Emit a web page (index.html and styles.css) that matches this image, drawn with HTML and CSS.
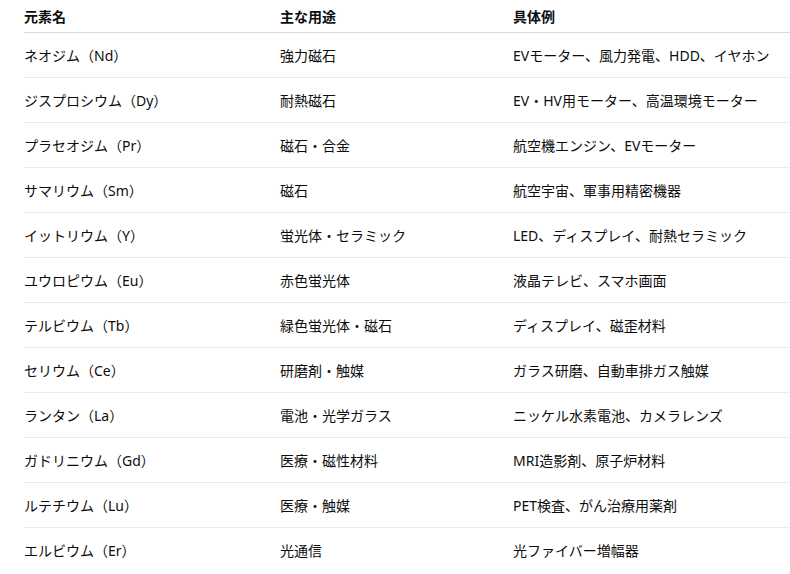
FILE: index.html
```html
<!DOCTYPE html>
<html lang="ja">
<head>
<meta charset="utf-8">
<link rel="stylesheet" href="styles.css">
</head>
<body>
<table class="tbl">
<thead>
<tr><th class="c1">元素名</th><th class="c2">主な用途</th><th class="c3">具体例</th></tr>
</thead>
<tbody>
<tr><td>ネオジム（Nd）</td><td>強力磁石</td><td>EVモーター、風力発電、HDD、イヤホン</td></tr>
<tr><td>ジスプロシウム（Dy）</td><td>耐熱磁石</td><td>EV・HV用モーター、高温環境モーター</td></tr>
<tr><td>プラセオジム（Pr）</td><td>磁石・合金</td><td>航空機エンジン、EVモーター</td></tr>
<tr><td>サマリウム（Sm）</td><td>磁石</td><td>航空宇宙、軍事用精密機器</td></tr>
<tr><td>イットリウム（Y）</td><td>蛍光体・セラミック</td><td>LED、ディスプレイ、耐熱セラミック</td></tr>
<tr><td>ユウロピウム（Eu）</td><td>赤色蛍光体</td><td>液晶テレビ、スマホ画面</td></tr>
<tr><td>テルビウム（Tb）</td><td>緑色蛍光体・磁石</td><td>ディスプレイ、磁歪材料</td></tr>
<tr><td>セリウム（Ce）</td><td>研磨剤・触媒</td><td>ガラス研磨、自動車排ガス触媒</td></tr>
<tr><td>ランタン（La）</td><td>電池・光学ガラス</td><td>ニッケル水素電池、カメラレンズ</td></tr>
<tr><td>ガドリニウム（Gd）</td><td>医療・磁性材料</td><td>MRI造影剤、原子炉材料</td></tr>
<tr><td>ルテチウム（Lu）</td><td>医療・触媒</td><td>PET検査、がん治療用薬剤</td></tr>
<tr><td>エルビウム（Er）</td><td>光通信</td><td>光ファイバー増幅器</td></tr>
</tbody>
</table>
</body>
</html>
```

FILE: styles.css
```css
html, body {
  margin: 0;
  padding: 0;
  background: #ffffff;
  overflow: hidden;
}
body {
  font-family: "Segoe UI", "Noto Sans", "Noto Sans CJK JP", sans-serif;
  font-size: 14px;
  color: #0d0d0d;
}
.tbl {
  margin-left: 24px;
  width: 766px;
  border-collapse: collapse;
  table-layout: fixed;
}
.c1 { width: 256px; }
.c2 { width: 233px; }
.c3 { width: 277px; }
.tbl th {
  text-align: left;
  font-weight: 700;
  height: 32px;
  padding: 0;
  vertical-align: middle;
  border-bottom: 1px solid #d9d9d9;
}
.tbl td {
  height: 44px;
  padding: 0;
  vertical-align: middle;
  border-bottom: 1px solid #ececec;
  white-space: nowrap;
}
.tbl tbody tr:last-child td {
  border-bottom: none;
}
```
